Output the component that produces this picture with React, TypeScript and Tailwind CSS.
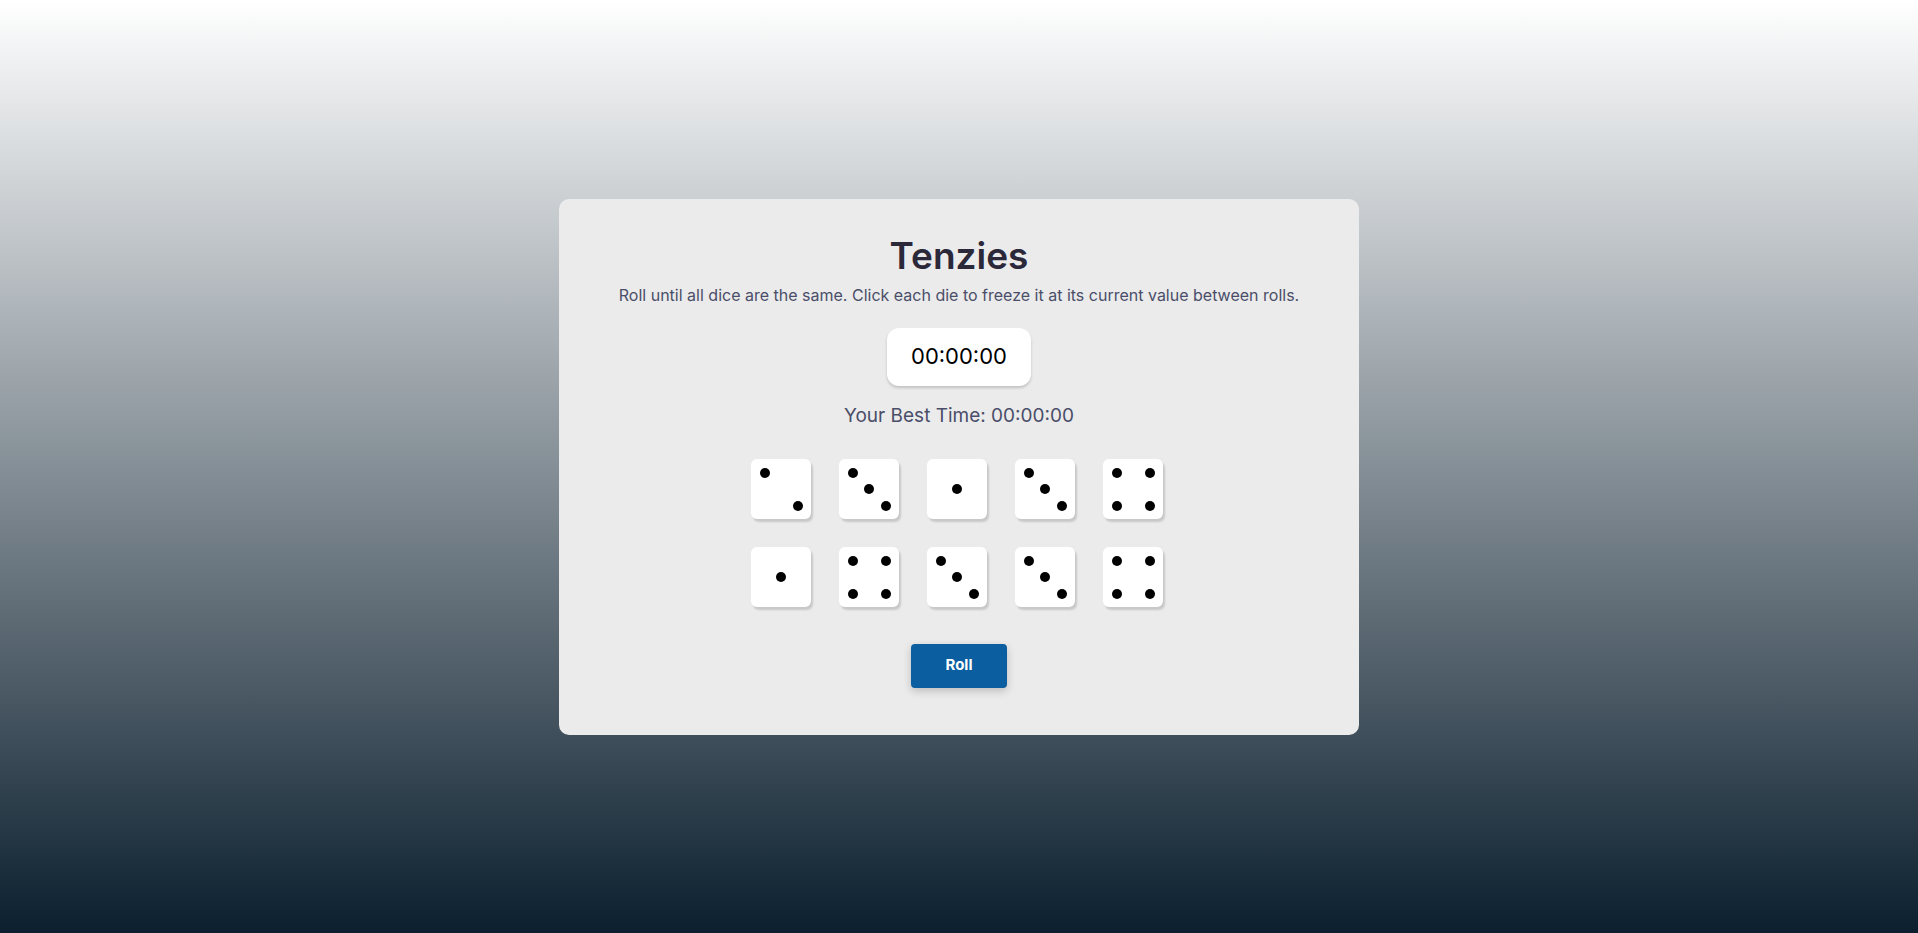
import React from "react";

const pips: Record<number, [number, number][]> = {
  1: [[30, 30]],
  2: [[14, 14], [47, 47]],
  3: [[14, 14], [30, 30], [47, 47]],
  4: [[14, 14], [47, 14], [14, 47], [47, 47]],
};

const Die: React.FC<{ value: number }> = ({ value }) => (
  <button className="relative w-[60px] h-[60px] bg-white rounded-[6px] shadow-[2px_3px_2px_rgba(0,0,0,0.15)]">
    {pips[value].map(([x, y], i) => (
      <span
        key={i}
        className="absolute w-[10px] h-[10px] rounded-full bg-black"
        style={{ left: x - 5, top: y - 5 }}
      />
    ))}
  </button>
);

const App: React.FC = () => {
  const dice = [2, 3, 1, 3, 4, 1, 4, 3, 3, 4];

  return (
    <main className="min-h-screen flex items-center justify-center bg-[linear-gradient(to_bottom,#ffffff,#0b1f2e)] font-['Inter','Liberation_Sans',sans-serif]">
      <div className="w-[800px] bg-[#ebebeb] rounded-[10px] flex flex-col items-center pt-[34px] pb-[47px]">
        <h1 className="text-[37px] font-semibold text-[#2b283a] leading-[46px]">Tenzies</h1>
        <p className="mt-[7px] text-[16px] leading-[19px] text-[#4a4e69]">
          Roll until all dice are the same. Click each die to freeze it at its current value between rolls.
        </p>
        <div className="mt-[23px] w-[144px] h-[58px] bg-white rounded-[12px] shadow-[0_2px_3px_rgba(0,0,0,0.18)] flex items-center justify-center text-[22px] text-black">
          00:00:00
        </div>
        <p className="mt-[18px] text-[19px] leading-[23px] text-[#4a4e69]">Your Best Time: 00:00:00</p>
        <div className="mt-[32px] mr-[5px] grid grid-cols-5 gap-[28px]">
          {dice.map((v, i) => (
            <Die key={i} value={v} />
          ))}
        </div>
        <button className="mt-[37px] w-[96px] h-[44px] bg-[#0b5e9f] text-white font-bold text-[15px] rounded-[4px] shadow-[0_3px_8px_rgba(0,0,0,0.2)]">
          Roll
        </button>
      </div>
    </main>
  );
};

export default App;
